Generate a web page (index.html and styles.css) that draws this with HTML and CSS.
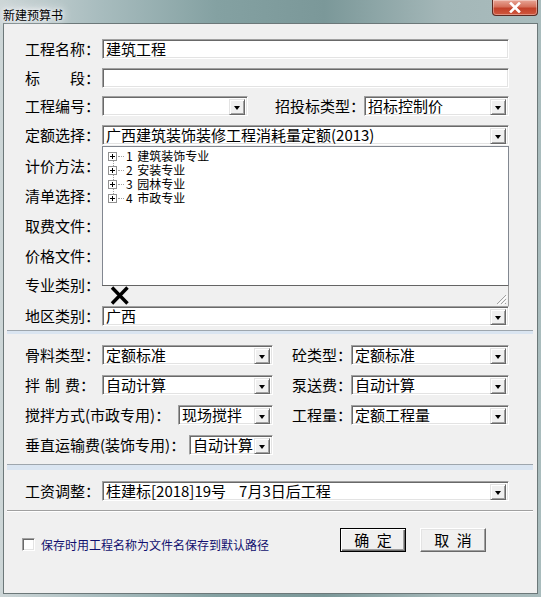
FILE: index.html
```html
<!DOCTYPE html>
<html lang="zh-CN">
<head>
  <meta charset="UTF-8">
  <meta name="viewport" content="width=device-width, initial-scale=1">
  <title>新建预算书</title>
  <link rel="stylesheet" href="styles.css">
</head>
<body>
  <div class="window">
    <!-- 标题栏 -->
    <div class="titlebar">
      <span class="title">新建预算书</span>
      <div class="close-btn">
        <svg width="14" height="11" viewBox="0 0 14 11"><path d="M3 1.5 L11 9.5 M11 1.5 L3 9.5" stroke="#fff" stroke-width="2.6" stroke-linecap="square"/></svg>
      </div>
    </div>

    <div class="client">
      <!-- 基本信息 -->
      <div class="section basic">
        <div class="row">
          <span class="lbl">工程名称：</span>
          <div class="edit grow">建筑工程</div>
        </div>
        <div class="row">
          <span class="lbl">标　　段：</span>
          <div class="edit grow"></div>
        </div>
        <div class="row">
          <span class="lbl">工程编号：</span>
          <div class="combo w-code"><span class="drop"></span></div>
          <span class="lbl lbl-bid">招投标类型：</span>
          <div class="combo grow">招标控制价<span class="drop"></span></div>
        </div>
        <div class="row tight">
          <span class="lbl">定额选择：</span>
          <div class="combo grow">广西建筑装饰装修工程消耗量定额(2013)<span class="drop"></span></div>
        </div>

        <div class="mid">
          <div class="mid-labels">
            <span class="mlbl">计价方法：</span>
            <span class="mlbl">清单选择：</span>
            <span class="mlbl">取费文件：</span>
            <span class="mlbl">价格文件：</span>
            <span class="mlbl short">专业类别：</span>
            <span class="mlbl area">地区类别：</span>
          </div>
          <div class="mid-right">
            <div class="tree">
              <div class="tree-list">
                <div class="tree-nodes">
                  <div class="node"><span class="pm"></span><span class="dots"></span><span class="txt">1 建筑装饰专业</span></div>
                  <div class="node"><span class="pm"></span><span class="dots"></span><span class="txt">2 安装专业</span></div>
                  <div class="node"><span class="pm"></span><span class="dots"></span><span class="txt">3 园林专业</span></div>
                  <div class="node"><span class="pm"></span><span class="dots"></span><span class="txt">4 市政专业</span></div>
                </div>
              </div>
              <div class="tree-status">
                <svg class="xmark" width="20" height="19" viewBox="0 0 20 19"><path d="M2 1.5 L17.5 17.5 M17.5 1.5 L2 17.5" stroke="#000" stroke-width="3.4"/></svg>
                <svg class="grip" width="12" height="12" viewBox="0 0 12 12">
                  <path d="M11 2 L2 11 M11 6 L6 11 M11 10 L10 11" stroke="#a0a0a0" stroke-width="1"/>
                  <path d="M12 3 L3 12 M12 7 L7 12" stroke="#fff" stroke-width="1"/>
                </svg>
              </div>
            </div>
            <div class="combo">广西<span class="drop"></span></div>
          </div>
        </div>
      </div>

      <div class="sep sep-blue"></div>

      <!-- 材料与费用 -->
      <div class="section extra">
        <div class="row">
          <div class="group-l">
            <span class="lbl">骨料类型：</span>
            <div class="combo grow">定额标准<span class="drop"></span></div>
          </div>
          <div class="group-r">
            <span class="lbl-r">砼类型：</span>
            <div class="combo grow">定额标准<span class="drop"></span></div>
          </div>
        </div>
        <div class="row">
          <div class="group-l">
            <span class="lbl">拌<i class="sp"></i>制<i class="sp"></i>费：</span>
            <div class="combo grow">自动计算<span class="drop"></span></div>
          </div>
          <div class="group-r">
            <span class="lbl-r">泵送费：</span>
            <div class="combo grow">自动计算<span class="drop"></span></div>
          </div>
        </div>
        <div class="row">
          <div class="group-l">
            <span class="lbl lbl-mix">搅拌方式(市政专用)：</span>
            <div class="combo grow">现场搅拌<span class="drop"></span></div>
          </div>
          <div class="group-r">
            <span class="lbl-r">工程量：</span>
            <div class="combo grow">定额工程量<span class="drop"></span></div>
          </div>
        </div>
        <div class="row last">
          <div class="group-l">
            <span class="lbl lbl-lift">垂直运输费(装饰专用)：</span>
            <div class="combo grow">自动计算<span class="drop"></span></div>
          </div>
        </div>
      </div>

      <div class="sep sep-blue wide"></div>

      <div class="section wage">
        <div class="row">
          <span class="lbl">工资调整：</span>
          <div class="combo grow">桂建标[2018]19号<i class="gap"></i>7月3日后工程<span class="drop"></span></div>
        </div>
      </div>

      <div class="sep sep-line"></div>

      <!-- 底部按钮 -->
      <div class="footer">
        <label class="check"><span class="box"></span>保存时用工程名称为文件名保存到默认路径</label>
        <div class="buttons">
          <button class="btn default">确&ensp;定</button>
          <button class="btn">取&ensp;消</button>
        </div>
      </div>
    </div>
  </div>
</body>
</html>
```

FILE: styles.css
```css
/* 新建预算书 对话框 */
* { box-sizing: border-box; }
body { margin: 0; font-family: "Noto Sans CJK SC", "Noto Sans", sans-serif; font-size: 15px; color: #000; background: #fff; }

.window { width: 541px; height: 597px; padding: 0 3px 3px 3px; display: flex; flex-direction: column;
  background: linear-gradient(90deg, #cdd6d7 0%, #a9bdbf 18%, #84a1a2 40%, #7b9899 60%, #a4b7b8 82%, #a9bcbd 100%); }
.titlebar { height: 23px; flex: none; position: relative; padding-top: 3px; }
.title { font-size: 12px; line-height: 15px; color: #000; text-shadow: 0 0 4px #fff, 0 0 8px #fff, 0 0 12px #eef; }
.close-btn { position: absolute; right: 0; top: 0; width: 46px; height: 16px; border: 1px solid #5a2a22; border-top: none;
  border-radius: 0 0 4px 4px; display: flex; align-items: center; justify-content: center;
  background: linear-gradient(#e8a697 0%, #d5705b 45%, #c2412a 55%, #d0583e 100%); box-shadow: inset 0 0 0 1px rgba(255,255,255,0.35); }

.client { flex: 1; background: #f0f0f0; border: 1px solid #6c7879; }

.section { padding: 0 28px 0 21px; }
.basic { padding-top: 15px; }
.row { display: flex; align-items: center; height: 20px; margin-bottom: 8.7px; }
.row.tight { margin-bottom: 1px; }
.lbl { width: 77px; flex: none; white-space: nowrap; line-height: 20px; }
.lbl-bid { width: 89px; margin-left: 27px; }
.sp { display: inline-block; width: 5px; }
.gap { display: inline-block; width: 13px; }

.edit, .combo { position: relative; height: 20px; background: #fff; white-space: nowrap; overflow: hidden;
  border: 1px solid; border-color: #a0a0a0 #fff #fff #a0a0a0;
  box-shadow: inset 1px 1px 0 #696969, inset -1px -1px 0 #e3e3e3;
  padding-left: 3px; line-height: 18px; }
.grow { flex: 1; }
.w-code { width: 146px; flex: none; }
.drop { position: absolute; right: 2px; top: 2px; width: 16px; height: 16px; background: #f0f0f0;
  border: 1px solid; border-color: #e3e3e3 #696969 #696969 #e3e3e3; box-shadow: inset 1px 1px 0 #fff, inset -1px -1px 0 #a0a0a0; }
.drop::after { content: ""; position: absolute; left: 4px; top: 6px; border-left: 3.5px solid transparent; border-right: 3.5px solid transparent; border-top: 4px solid #000; }

/* 中部：定额树 */
.mid { display: flex; }
.mid-labels { width: 77px; flex: none; padding-top: 5px; display: flex; flex-direction: column; }
.mlbl { height: 30px; line-height: 30px; white-space: nowrap; }
.mlbl.short { height: 28px; line-height: 28px; }
.mlbl.area { height: 20px; line-height: 20px; margin-top: 7px; }
.mid-right { flex: 1; display: flex; flex-direction: column; }
.tree { height: 160px; display: flex; flex-direction: column; }
.tree-list { flex: 1; background: #fff; border: 1px solid #828790; border-bottom: none; padding: 2px 0 0 5px; }
.tree-nodes { position: relative; }
.tree-nodes::before { content: ""; position: absolute; left: 5px; top: 7px; height: 42px; border-left: 1px dotted #a0a0a0; }
.node { position: relative; height: 14px; display: flex; align-items: center; font-size: 12px; line-height: 14px; }
.txt { word-spacing: 2px; }
.pm { width: 9px; height: 9px; border: 1px solid #919191; background: #fff; position: relative; flex: none; }
.pm::before { content: ""; position: absolute; left: 1px; top: 3px; width: 5px; height: 1px; background: #000; }
.pm::after { content: ""; position: absolute; left: 3px; top: 1px; width: 1px; height: 5px; background: #000; }
.dots { width: 6px; border-top: 1px dotted #a0a0a0; margin: 0 2px 0 1px; }
.tree-status { position: relative; height: 21px; background: #f0f0f0; border-top: 1px solid #646464; border-right: 1px solid #a0a0a0; }
.xmark { position: absolute; left: 8px; top: 0; }
.grip { position: absolute; right: 1px; bottom: 1px; }

/* 分隔线 */
.sep { margin: 0 4px 0 3px; }
.sep-blue { height: 4px; margin-top: 4px; border-top: 1px solid #9ea6ad; background: #dae5f1; }
.sep-blue.wide { height: 6px; margin-top: 9px; }
.sep-line { height: 2px; margin-top: 9px; border-top: 1px solid #a0a0a0; background: #fff; }

.extra { padding-top: 11px; }
.extra .row { margin-bottom: 10px; }
.extra .row.last { margin-bottom: 0; }
.group-l { width: 248px; flex: none; display: flex; align-items: center; }
.group-r { flex: 1; display: flex; align-items: center; margin-left: 19px; }
.lbl-r { width: 59px; flex: none; white-space: nowrap; line-height: 20px; }
.lbl-mix { width: 153px; }
.lbl-lift { width: 164px; }
.wage { padding-top: 11px; }
.wage .row { margin-bottom: 0; }

/* 底部 */
.footer { display: flex; align-items: flex-start; padding: 16px 51px 0 18px; }
.check { display: flex; align-items: center; margin-top: 10px; font-size: 12px; line-height: 13px; color: #10106e; }
.box { width: 13px; height: 13px; margin-right: 6px; background: #fff; border: 1px solid; border-color: #a0a0a0 #fff #fff #a0a0a0; box-shadow: inset 1px 1px 0 #696969, inset -1px -1px 0 #e3e3e3; }
.buttons { margin-left: auto; display: flex; gap: 14px; }
.btn { width: 66px; height: 24px; padding: 0; font-family: inherit; font-size: 15px; line-height: 20px; color: #000; background: #f0f0f0;
  border: 1px solid; border-color: #fff #696969 #696969 #fff; box-shadow: inset -1px -1px 0 #a0a0a0, inset 1px 1px 0 #e3e3e3; }
.btn.default { border-color: #000; box-shadow: inset 1px 1px 0 #fff, inset -1px -1px 0 #696969, inset -2px -2px 0 #a0a0a0; }
```
